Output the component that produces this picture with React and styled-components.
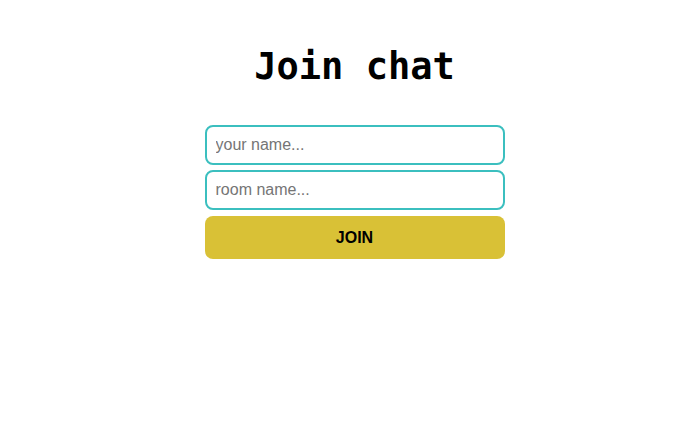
import React from "react";
import styled, { createGlobalStyle } from "styled-components";

const GlobalStyle = createGlobalStyle`
  body {
    margin: 0;
    background: #ffffff;
    font-family: "Liberation Sans", Arial, sans-serif;
  }
`;

const Page = styled.main`
  display: flex;
  flex-direction: column;
  align-items: center;
  padding: 43px 0 0 28px;
`;

const Title = styled.h1`
  margin: 0 0 34px;
  font-family: "DejaVu Sans Mono", "Liberation Mono", monospace;
  font-weight: 700;
  font-size: 37px;
  line-height: 48px;
  color: #000;
`;

const Form = styled.form`
  display: flex;
  flex-direction: column;
  gap: 5px;
  width: 300px;
`;

const Input = styled.input`
  box-sizing: border-box;
  height: 40px;
  padding: 0 9px;
  border: 2px solid #3bbfbf;
  border-radius: 8px;
  font-family: "Liberation Sans", Arial, sans-serif;
  font-size: 16px;
  outline: none;

  &::placeholder {
    color: #757575;
  }
`;

const Button = styled.button`
  height: 43px;
  margin-top: 1px;
  border: none;
  border-radius: 8px;
  background: #d9c136;
  font-family: "Liberation Sans", Arial, sans-serif;
  font-weight: 700;
  font-size: 16px;
  color: #000;
  cursor: pointer;
`;

function App() {
  return (
    <Page>
      <GlobalStyle />
      <Title>Join chat</Title>
      <Form onSubmit={(e) => e.preventDefault()}>
        <Input placeholder="your name..." />
        <Input placeholder="room name..." />
        <Button type="submit">JOIN</Button>
      </Form>
    </Page>
  );
}

export default App;
